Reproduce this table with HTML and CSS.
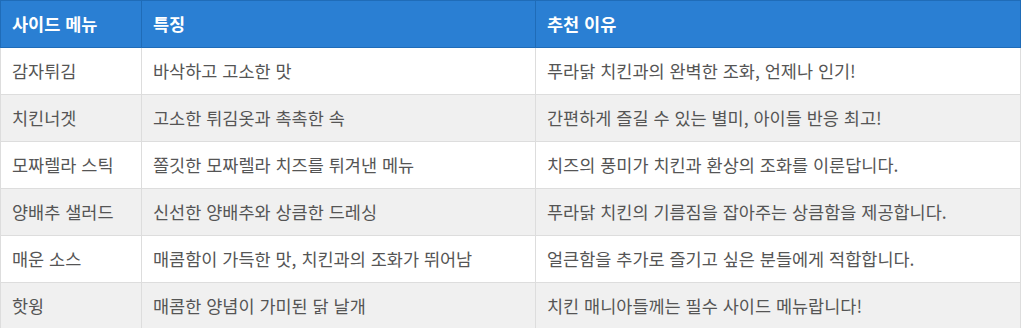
FILE: index.html
```html
<!DOCTYPE html>
<html lang="ko">
<head>
<meta charset="utf-8">
<link rel="stylesheet" href="styles.css">
</head>
<body>
<table class="menu-table">
  <thead>
    <tr><th class="c1">사이드 메뉴</th><th class="c2">특징</th><th class="c3">추천 이유</th></tr>
  </thead>
  <tbody>
    <tr><td class="name">감자튀김</td><td>바삭하고 고소한 맛</td><td>푸라닭 치킨과의 완벽한 조화, 언제나 인기!</td></tr>
    <tr><td class="name">치킨너겟</td><td>고소한 튀김옷과 촉촉한 속</td><td>간편하게 즐길 수 있는 별미, 아이들 반응 최고!</td></tr>
    <tr><td class="name">모짜렐라 스틱</td><td>쫄깃한 모짜렐라 치즈를 튀겨낸 메뉴</td><td>치즈의 풍미가 치킨과 환상의 조화를 이룬답니다.</td></tr>
    <tr><td class="name">양배추 샐러드</td><td>신선한 양배추와 상큼한 드레싱</td><td>푸라닭 치킨의 기름짐을 잡아주는 상큼함을 제공합니다.</td></tr>
    <tr><td class="name">매운 소스</td><td>매콤함이 가득한 맛, 치킨과의 조화가 뛰어남</td><td>얼큰함을 추가로 즐기고 싶은 분들에게 적합합니다.</td></tr>
    <tr><td class="name">핫윙</td><td>매콤한 양념이 가미된 닭 날개</td><td>치킨 매니아들께는 필수 사이드 메뉴랍니다!</td></tr>
  </tbody>
</table>
</body>
</html>
```
FILE: styles.css
```css
html, body {
  margin: 0;
  padding: 0;
  background: #ffffff;
}
body {
  font-family: "Noto Sans CJK KR", "Noto Sans", sans-serif;
  font-size: 17.5px;
  color: #555555;
}
.menu-table {
  width: 1021px;
  border-collapse: collapse;
  table-layout: fixed;
}
.menu-table th, .menu-table td {
  padding: 12px 11px;
  line-height: 22px;
  text-align: left;
  vertical-align: middle;
  white-space: nowrap;
}
.menu-table th {
  background: #2a7fd3;
  color: #ffffff;
  font-weight: 700;
  border: 1px solid #1f6cb8;
}
.menu-table td {
  border: 1px solid #dddddd;
}
.c1 { width: 118px; }
.c2 { width: 371px; }
.menu-table tbody tr:nth-child(odd) td { background: #ffffff; }
.menu-table tbody tr:nth-child(even) td { background: #f0f0f0; }
.menu-table tbody td.name { background: #dcdedd; }
```
